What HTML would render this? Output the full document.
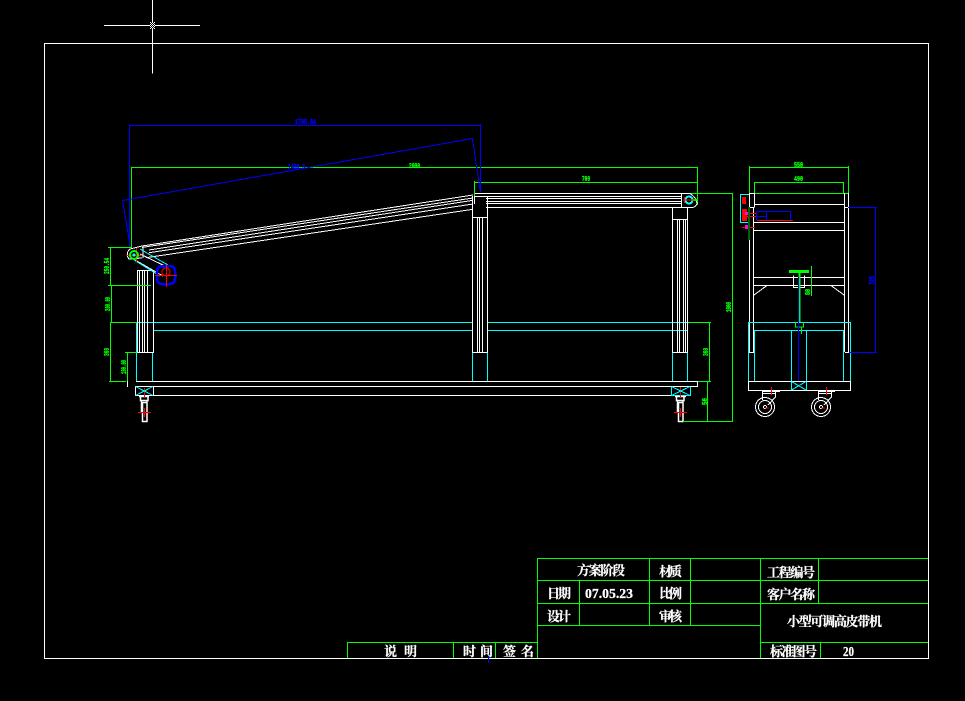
<!DOCTYPE html>
<html><head><meta charset="utf-8"><style>
html,body{margin:0;padding:0;background:#000;width:965px;height:701px;overflow:hidden}
svg{display:block}
.w{stroke:#fff}.g{stroke:#0f0}.c{stroke:#0ff}.b{stroke:#00f}.r{stroke:#f00}
.x{shape-rendering:crispEdges}
.t{fill:#fff;stroke:#fff;stroke-width:.25px;font-family:"Liberation Serif","Noto Serif CJK SC",serif;font-size:13px;font-weight:bold}
.d{font-family:"Liberation Mono",monospace;font-size:7px;font-weight:bold;stroke-width:.35px}
.dg{fill:#0f0;stroke:#0f0}.db{fill:#00f;stroke:#00f}
</style></head><body>
<svg width="965" height="701" viewBox="0 0 965 701" fill="none" stroke-width="1">
<g>
<!-- crosshair & frame -->
<path class="w" d="M152.5 0V73.5M104 25.5H200"/>
<rect x="150" y="22" width="5" height="7" fill="#000"/>
<path fill="#fff" d="M150 22h1v1h-1zM152 22h1v1h-1zM154 22h1v1h-1zM151 23h1v1h-1zM153 23h1v1h-1zM150 24h1v1h-1zM152 24h1v1h-1zM154 24h1v1h-1zM151 25h1v1h-1zM153 25h1v1h-1zM150 26h1v1h-1zM152 26h1v1h-1zM154 26h1v1h-1zM151 27h1v1h-1zM153 27h1v1h-1zM150 28h1v1h-1zM152 28h1v1h-1zM154 28h1v1h-1z"/>
<path class="w" d="M44.5 43.5H928.5V658.5H44.5Z"/>
<!-- title block -->
<path class="g" d="M537.5 658V558.5H928M537.5 580.5H928M537.5 603.5H928M537.5 625.5H760M347.5 658V642.5H537.5M453.5 642.5V658M495.5 642.5V658M579.5 580.5V625M649.5 558.5V625M690.5 558.5V625M760.5 558.5V658M818.5 558.5V603M760.5 642.5H928M820.5 642.5V658"/>
<path class="b" d="M488.5 654V663"/>
<!-- cyan -->
<path class="c" d="M136.5 322.5H472M488 322.5H690M153 330.5H472M488 330.5H672M672 330.5H687"/>
<path class="c" d="M136.5 322V381M152.5 352V381M472.5 352V381M487.5 352V381M672.5 352V381M687.5 352V381"/>
<path class="c" d="M135.5 386.5h18v9h-18zM671.5 386.5h19v9h-19z"/>
<!-- white front view -->
<path class="w" d="M137.5 270.5H153.5V352.5H137.5ZM139.5 270V352M142.5 270V352M144.5 270V352M147.5 270V352"/>
<path class="w" d="M472.5 196V352.5H487.5V196M472.5 217.5H487.5M477.5 217V352M479.5 217V352M482.5 217V352"/>
<path class="w" d="M672.5 207V352.5H687.5V207M672.5 219.5H687.5M677.5 219V352M679.5 219V352M683.5 219V352M685.5 219V352"/>
<path class="w" d="M136 381.5H697.5V386.5H135.5V395.5H671M153 395.5H671M153.5 386V395M671 386.5H697"/>
<path class="w" d="M474 193.5H681M474 196.5H681M486 198.5H681M486 201.5H681M486 203.5H681M486 207.5H681"/>
<path class="w" d="M474.5 193V204M681.5 193V207"/>
<path class="w" d="M681 193.5H692M681 207.5H692M127.5 381V387"/>
<!-- casters front -->
<path class="w" stroke-width="1.5" d="M139 396.5H149M140.5 397V400.5H148V397M141.5 400V412M147 400V412M142.5 402.5H147V421.5H142.5Z"/>
<path class="w" stroke-width="1.5" d="M675 396.5H686M676.5 397V400.5H684V397M677.5 400V412M683 400V412M678.5 402.5H683V421.5H678.5Z"/>
<path class="r" d="M144.5 388V398M138 412.5H151M144.5 408V417M680.5 387V398M674 412.5H687M680.5 408V417"/>
<!-- dims green front -->
<path class="g" d="M131 167.5H697.5V205M131.5 167V248M474 182.5H697M474.5 181V196"/>
<path class="g" d="M690 193.5H733M732.5 193V421.5H683M707.5 381V421M698 381.5H711M709.5 322V381M689 322.5H711"/>
<path class="g" d="M108 247.5H131M110.5 247V285M108 285.5H151M111.5 285V322M110 322.5H137M110.5 322V381M109 381.5H126M125 352.5H137M127.5 352V381"/>
<!-- dims blue front -->
<path class="b" d="M129 125.5H480M129.5 125V247M480.5 124V192"/>
<!-- side view -->
<path class="g" d="M749 167.5H848M749.5 166V193M848.5 166V193M754 182.5H843M754.5 182V193M843.5 182V193M749 193.5H848"/>
<path class="w" d="M749.5 193V352.5H753.5V207M754.5 193V207M749.5 193.5h5M749.5 207.5h5M844.5 193V352M848.5 193V352.5H845M844.5 207.5h4M754 204.5H844M754 222.5H844M754 230.5H844M754 277.5H844M754 285.5H844"/>
<path class="w" d="M793.5 275.5V287.5H798M804.5 275.5V287.5H800"/>
<path class="c" d="M748.5 322.5H850.5V381M748.5 322V381M754 330.5H843M754.5 330V381M843.5 330V381M791.5 330V390M806.5 330V390M740.5 194.5H749M740.5 194V222.5H749"/>
<path class="w" d="M748.5 381.5H850.5V390.5H748.5ZM762 391.5H780M818 391.5H835M762 393.5H776M818 393.5H832"/>
<rect x="789" y="270" width="20" height="3" fill="#0f0"/>
<path class="g" stroke-width="2" d="M799.5 273V322"/>
<path class="g" d="M795.5 322V327H803.5V322M801.5 327V334M811.5 266V296"/>
<path class="b" d="M798.5 277V381M848 207.5H877M849 352.5H877M875.5 207V352M756.5 211.5H790.5V220M766.5 211V220M756.5 211V220M742 216.5H766"/>
<path class="r" d="M757 220.5H793M742 213.5H756M742 216.5H756M742 227.5H755M771.5 387V395M826.5 387V395"/>
<rect x="742" y="197" width="4" height="7" fill="#f00"/>
<rect x="742" y="209" width="5" height="12" fill="#f00"/>
<rect x="745" y="212" width="3" height="3" fill="#f0f"/>
<rect x="745" y="225" width="3" height="4" fill="#f0f"/>
<rect x="748" y="207" width="2" height="33" fill="#006400"/>
</g>
<!-- slant belt -->
<g class="x">
<path class="w" d="M142 246L473 195M142 247.4L473 198M149 250L473 200.3M149 252.7L473 204M146 257.7L473 209.3"/>
<path class="b" d="M122.5 200.5L472.5 138.5L480 190M122.5 200.5L130 245"/>
<path class="w" d="M142 246L130 249A7 7 0 0 0 129 259L142 258M135 260L163 276M140 254L167 267M143 246V258"/>
<path class="c" d="M140 249L168 265M134 260L160 276"/>
<rect x="157" y="266" width="18" height="18" rx="5" stroke="#00f" stroke-width="2.5"/>
<circle cx="166" cy="272" r="4" class="r"/>
<path class="r" d="M166.5 265V287M155 275.5H177M126 255.5H142M136.5 248V262"/>
<circle cx="134" cy="255" r="4" stroke="#0f0" stroke-width="2"/>
<circle cx="134" cy="255" r="1.5" fill="#0ff"/>
<!-- right roller -->
<path class="w" d="M690 193.5A14 14 0 0 1 697 203A5 5 0 0 1 692 207.5"/>
<circle cx="689" cy="200" r="3.5" stroke="#0ff" stroke-width="2"/>
<path class="g" stroke-width="2" d="M692 200H697"/>
<path class="r" d="M683 200H695M684.5 197V203"/>
<!-- side wheels -->
<circle cx="765" cy="407" r="9.5" class="w"/><circle cx="765" cy="407" r="6.5" class="w"/><circle cx="765" cy="407" r="1.5" class="w"/>
<circle cx="821" cy="407" r="9.5" class="w"/><circle cx="821" cy="407" r="6.5" class="w"/><circle cx="821" cy="407" r="1.5" class="w"/>
<path class="w" d="M762.5 391V400M775.5 391V397L768 405M818.5 391V400M831.5 391V397L824 405"/>
<path class="r" d="M765 408H769M821 408H825"/>
<path class="c" d="M135.5 386.5L153 395.5M135.5 395.5L153 386.5M671.5 386.5L690 395.5M671.5 395.5L690 386.5M791.5 381.5L806 390M791.5 390L806 381.5"/>
<path class="w" d="M754 295L767 285.5M844 295L831 285.5"/>
</g>
<!-- dim text -->
<g class="d">
<text class="db" x="295" y="124" textLength="21" lengthAdjust="spacingAndGlyphs">1795.84</text>
<text class="db" x="288" y="169" textLength="17" lengthAdjust="spacingAndGlyphs">1430.3</text>
<text class="dg" x="409" y="168" textLength="11" lengthAdjust="spacingAndGlyphs">2000</text>
<text class="dg" x="582" y="181" textLength="8" lengthAdjust="spacingAndGlyphs">700</text>
<text class="dg" x="794" y="167" textLength="9" lengthAdjust="spacingAndGlyphs">550</text>
<text class="dg" x="794" y="181" textLength="9" lengthAdjust="spacingAndGlyphs">490</text>
<text class="dg" transform="translate(109,274) rotate(-90)" textLength="16" lengthAdjust="spacingAndGlyphs">250.54</text>
<text class="dg" transform="translate(110,311) rotate(-90)" textLength="14" lengthAdjust="spacingAndGlyphs">200.00</text>
<text class="dg" transform="translate(109,356) rotate(-90)" textLength="8" lengthAdjust="spacingAndGlyphs">360</text>
<text class="dg" transform="translate(126,374) rotate(-90)" textLength="14" lengthAdjust="spacingAndGlyphs">190.00</text>
<text class="dg" transform="translate(731,312) rotate(-90)" textLength="10" lengthAdjust="spacingAndGlyphs">1000</text>
<text class="dg" transform="translate(708,356) rotate(-90)" textLength="8" lengthAdjust="spacingAndGlyphs">360</text>
<text class="dg" transform="translate(707,405) rotate(-90)" textLength="7" lengthAdjust="spacingAndGlyphs">50</text>
<text class="db" transform="translate(874,285) rotate(-90)" textLength="9" lengthAdjust="spacingAndGlyphs">725</text>
<text class="dg" transform="translate(810,295) rotate(-90)" textLength="6" lengthAdjust="spacingAndGlyphs">80</text>
</g>
<!-- title text -->
<g class="t">
<text x="577" y="575" textLength="48">方案阶段</text>
<text x="659" y="576" textLength="23">材质</text>
<text x="767" y="577" textLength="48">工程编号</text>
<text x="547" y="598" textLength="24">日期</text>
<text x="585" y="598" textLength="48" lengthAdjust="spacingAndGlyphs" style="font-size:14px">07.05.23</text>
<text x="659" y="598" textLength="23">比例</text>
<text x="767" y="599" textLength="48">客户名称</text>
<text x="547" y="621" textLength="24">设计</text>
<text x="659" y="621" textLength="23">审核</text>
<text x="787" y="626" textLength="95">小型可调高皮带机</text>
<text x="770" y="656" textLength="47">标准图号</text>
<text x="843" y="656" textLength="11" lengthAdjust="spacingAndGlyphs" style="font-size:14px">20</text>
<text x="384" y="656">说</text><text x="404" y="656">明</text>
<text x="463" y="656">时</text><text x="480" y="656">间</text>
<text x="503" y="656">签</text><text x="521" y="656">名</text>
</g>
</svg>
</body></html>
